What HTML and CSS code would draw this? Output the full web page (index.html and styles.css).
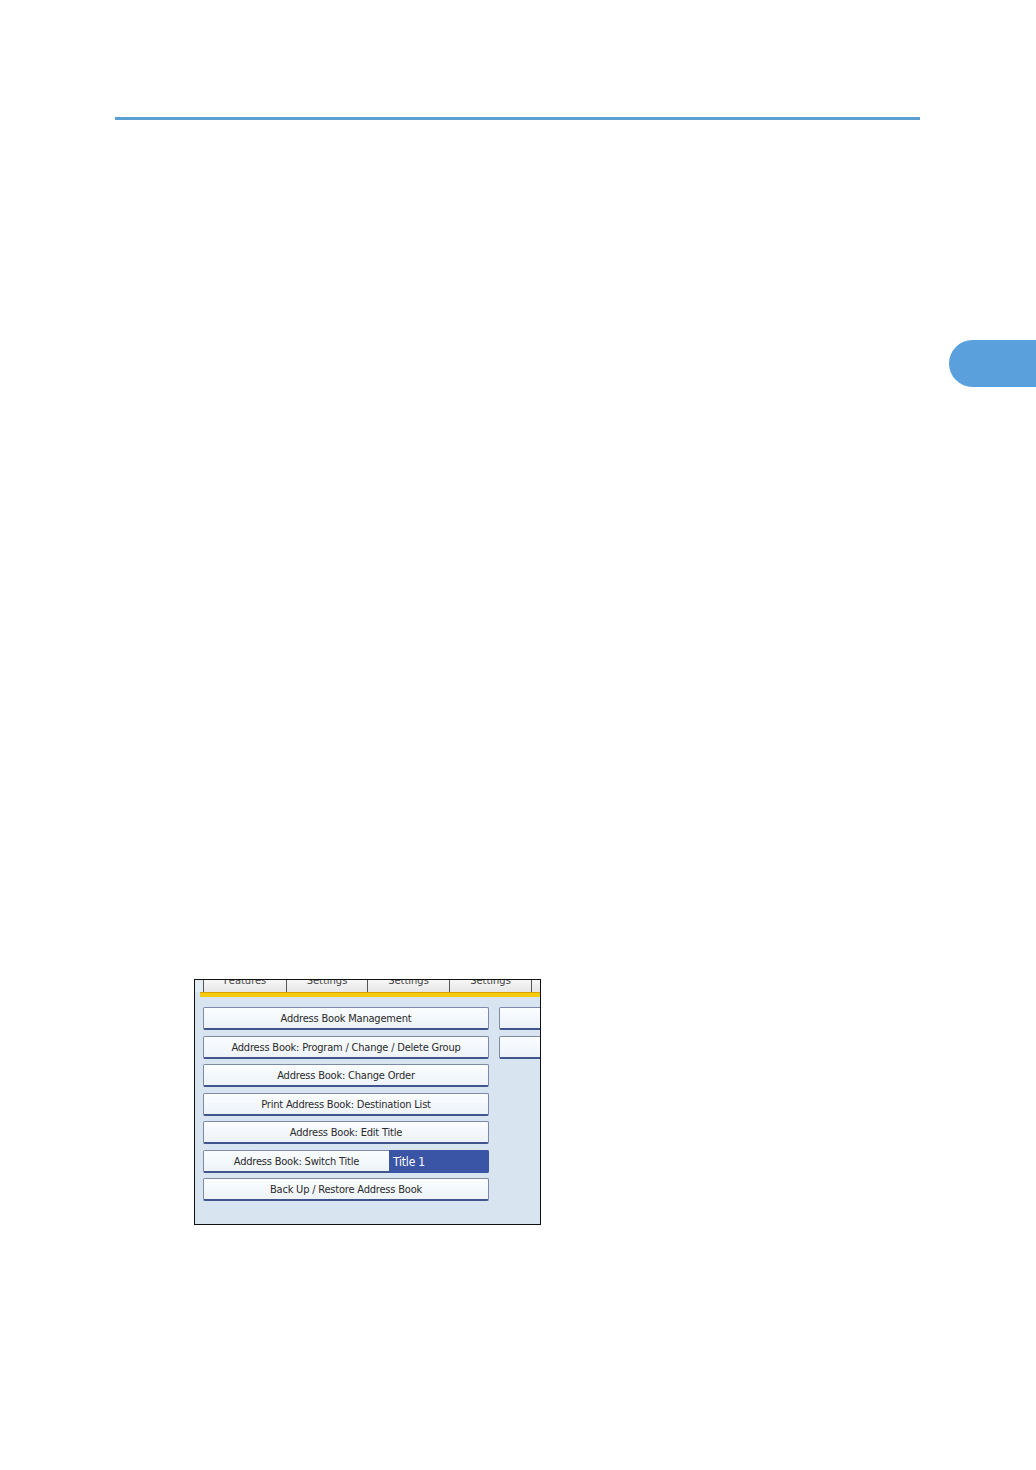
FILE: index.html
```html
<!DOCTYPE html>
<html>
<head>
<meta charset="utf-8">
<link rel="stylesheet" href="styles.css">
</head>
<body>
<div class="page">
  <div class="rule"></div>
  <div class="thumb-row"><div class="thumb"></div></div>
  <div class="figure">
    <div class="tabs">
      <div class="tab tab1">Features</div>
      <div class="tab tab2">Settings</div>
      <div class="tab tab3">Settings</div>
      <div class="tab tab4">Settings</div>
      <div class="tab tab5"></div>
    </div>
    <div class="yellow"></div>
    <div class="panel">
      <div class="col-left">
        <div class="btn">Address Book Management</div>
        <div class="btn">Address Book: Program / Change / Delete Group</div>
        <div class="btn">Address Book: Change Order</div>
        <div class="btn">Print Address Book: Destination List</div>
        <div class="btn">Address Book: Edit Title</div>
        <div class="btn split"><span class="split-label">Address Book: Switch Title</span><span class="split-value">Title 1</span></div>
        <div class="btn">Back Up / Restore Address Book</div>
      </div>
      <div class="col-right">
        <div class="btn"></div>
        <div class="btn"></div>
      </div>
    </div>
  </div>
</div>
</body>
</html>
```

FILE: styles.css
```css
html, body {
  margin: 0;
  padding: 0;
  background: #ffffff;
}
.page {
  width: 1036px;
  height: 1470px;
  overflow: hidden;
  font-family: "DejaVu Sans Condensed", "Liberation Sans", sans-serif;
}
.rule {
  margin: 117px 0 0 115px;
  width: 805px;
  height: 3px;
  background: #5b9fd3;
}
.thumb-row {
  display: flex;
  justify-content: flex-end;
  margin-top: 220px;
}
.thumb {
  width: 87px;
  height: 47px;
  background: #5aa0dd;
  border-radius: 24px 0 0 24px;
}
.figure {
  margin: 592px 0 0 194px;
  width: 345px;
  height: 244px;
  border: 1px solid #111;
  background: #d8e5f1;
  overflow: hidden;
}
.tabs {
  display: flex;
  height: 12px;
  padding-left: 8px;
  background: #e4ecf4;
  overflow: hidden;
}
.tab {
  flex: none;
  height: 12px;
  box-sizing: border-box;
  background: linear-gradient(#f7f7f7, #e6e6e6);
  border-left: 1px solid #555;
  font-size: 11px;
  line-height: 2px;
  color: #444;
  text-align: center;
  overflow: hidden;
}
.tab1 { width: 83px; }
.tab2 { width: 81px; }
.tab3 { width: 82px; }
.tab4 { width: 82px; }
.tab5 { width: 20px; }
.yellow {
  margin-left: 5px;
  height: 4px;
  background: #f6cb0f;
  border-top: 1px solid #d9a400;
}
.panel {
  display: flex;
  gap: 10px;
  padding: 10px 0 0 8px;
}
.col-left {
  display: flex;
  flex-direction: column;
  gap: 5.5px;
  width: 286px;
  flex: none;
}
.col-right {
  display: flex;
  flex-direction: column;
  gap: 5.5px;
  width: 60px;
  flex: none;
}
.btn {
  box-sizing: border-box;
  height: 23px;
  border: 1px solid #7d89a8;
  border-bottom: 2px solid #40548e;
  border-radius: 2px;
  background: linear-gradient(#fbfdff, #edf3f9);
  font-size: 11px;
  line-height: 21px;
  color: #2a2a2a;
  text-align: center;
  white-space: nowrap;
  letter-spacing: -0.2px;
}
.btn.split {
  display: flex;
  padding: 0;
}
.split-label {
  width: 185px;
  flex: none;
  text-align: center;
}
.split-value {
  flex: 1;
  background: #3b55a6;
  color: #fff;
  text-align: left;
  padding-left: 4px;
  line-height: 24px;
  font-size: 12px;
  border-radius: 0 2px 2px 0;
  margin: -1px -1px -2px 0;
}
```
